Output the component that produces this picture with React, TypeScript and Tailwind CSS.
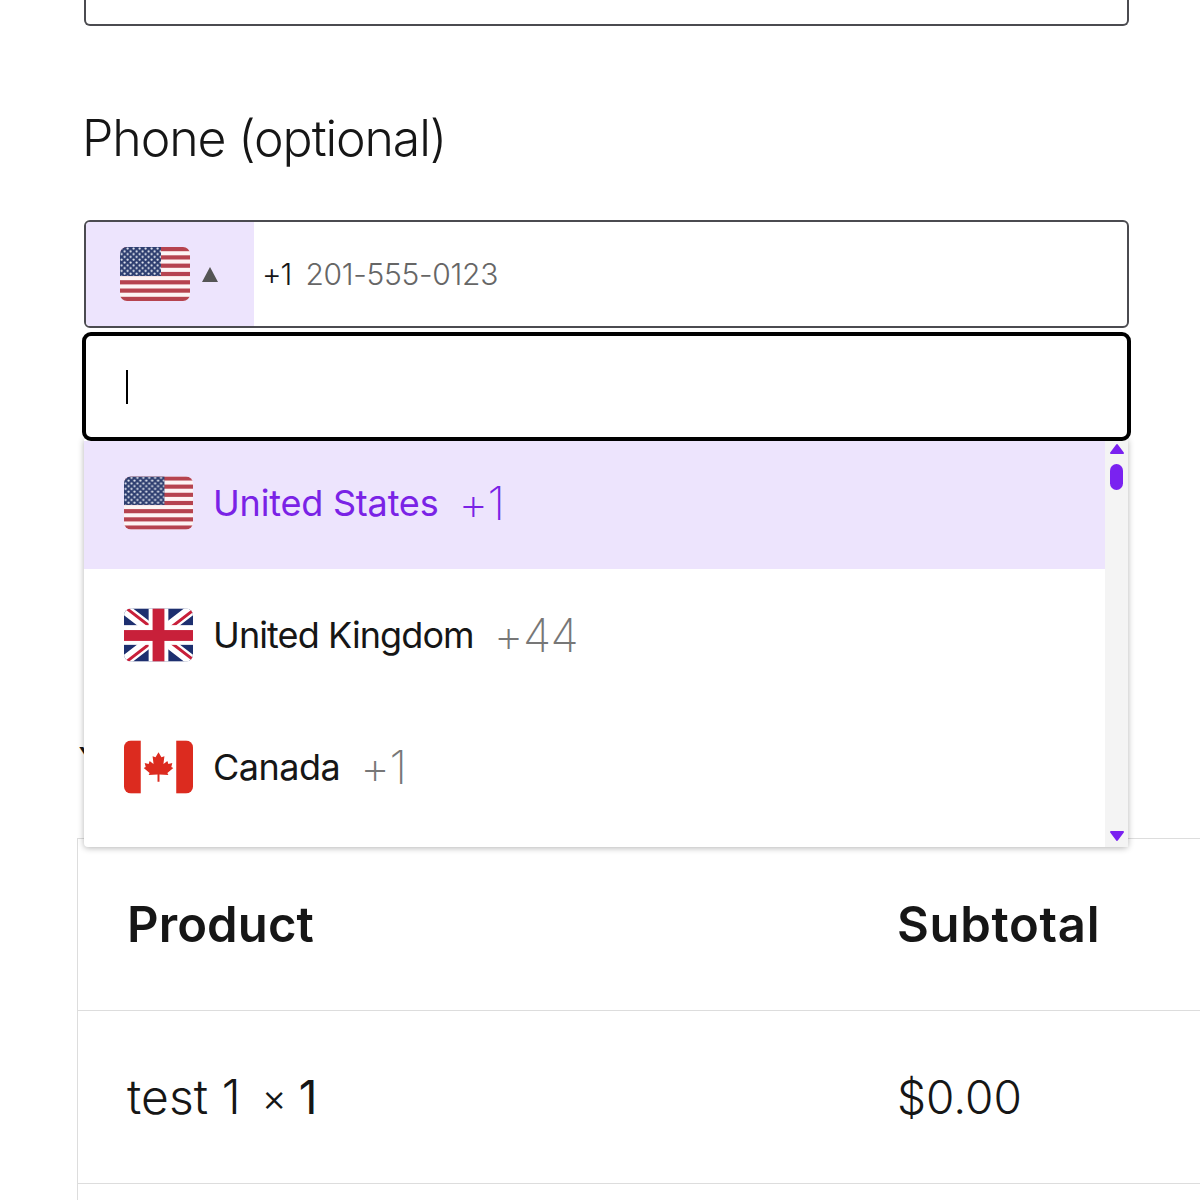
import { ReactNode } from 'react'

function UsFlag() {
  return (
    <svg viewBox="0 0 70 54" className="w-full h-full block">
      <defs>
        <pattern id="stars" width="6" height="5.6" patternUnits="userSpaceOnUse">
          <circle cx="1.6" cy="1.5" r="1.1" fill="#e3e7f0" />
          <circle cx="4.6" cy="4.3" r="1.1" fill="#e3e7f0" />
        </pattern>
        <clipPath id="usRound">
          <rect width="70" height="54" rx="7" />
        </clipPath>
      </defs>
      <g clipPath="url(#usRound)">
        <rect width="70" height="54" fill="#fdf4f4" />
        {[0, 8.3, 16.6, 24.9, 33.2, 41.5, 49.8].map((y) => (
          <rect key={y} y={y} width="70" height="4.2" fill="#b6434f" />
        ))}
        <rect width="41" height="29" fill="#2f3f70" />
        <rect width="41" height="29" fill="url(#stars)" />
      </g>
    </svg>
  )
}

function UkFlag() {
  return (
    <svg viewBox="0 0 70 54" className="w-full h-full block">
      <defs>
        <clipPath id="ukRound">
          <rect width="70" height="54" rx="7" />
        </clipPath>
      </defs>
      <g clipPath="url(#ukRound)">
        <rect width="70" height="54" fill="#1d2f6f" />
        <path d="M0 0 L70 54 M70 0 L0 54" stroke="#fff" strokeWidth="11" />
        <path d="M0 0 L35 27 M35 27 L70 54" stroke="#c8203a" strokeWidth="3" transform="translate(0 -2)" />
        <path d="M70 0 L35 27 M35 27 L0 54" stroke="#c8203a" strokeWidth="3" transform="translate(0 2)" />
        <rect x="25" width="20" height="54" fill="#fff" />
        <rect y="17" width="70" height="20" fill="#fff" />
        <rect x="29" width="12" height="54" fill="#c8203a" />
        <rect y="22" width="70" height="11" fill="#c8203a" />
      </g>
    </svg>
  )
}

function CaFlag() {
  return (
    <svg viewBox="0 0 70 54" className="w-full h-full block">
      <defs>
        <clipPath id="caRound">
          <rect width="70" height="54" rx="7" />
        </clipPath>
      </defs>
      <g clipPath="url(#caRound)">
        <rect width="70" height="54" fill="#fff" />
        <rect width="17" height="54" fill="#dc2b1f" />
        <rect x="53" width="17" height="54" fill="#dc2b1f" />
        <path
          d="M35 12 L38 17 L41 16 L40 24 L44 21 L45 24 L49 23 L48 27 L50 28 L44 33 L45 35 L36 34.5 L36 42 L34 42 L34 34.5 L25 35 L26 33 L20 28 L22 27 L21 23 L25 24 L26 21 L30 24 L29 16 L32 17 Z"
          fill="#dc2b1f"
        />
      </g>
    </svg>
  )
}

function ScrollArrow({ down }: { down?: boolean }) {
  return (
    <svg viewBox="0 0 16 12" className="w-[16px] h-[12px] block">
      <path d={down ? 'M2 2 H14 L8 10 Z' : 'M8 2 L14 10 H2 Z'} fill="#7a22f0" stroke="#7a22f0" strokeWidth="2" strokeLinejoin="round" />
    </svg>
  )
}

function CountryRow({ flag, name, code, active, nameClass }: { flag: ReactNode; name: string; code: string; active?: boolean; nameClass: string }) {
  return (
    <div className={`flex items-center pl-[40px] text-[36px] ${active ? 'h-[128px] pb-[4px] bg-[#ede4fd] text-[#7a22e6]' : 'h-[132px] text-[#161616]'}`}>
      <div className="w-[69px] h-[54px] shrink-0">{flag}</div>
      <span className={`ml-[20px] font-normal ${nameClass}`}>{name}</span>
      <span className={`ml-[20px] text-[46px] leading-[54px] font-extralight tracking-[-0.5px] ${active ? '' : 'text-[#777777]'}`}>{code}</span>
    </div>
  )
}

export default function App() {
  return (
    <div className="w-[1200px] h-[1200px] overflow-hidden bg-white font-['Inter',sans-serif] text-[#161616]">
      <div className="pl-[84px] pr-[71px]">
        <div className="h-[26px] border-2 border-t-0 border-[#4b4b50] rounded-b-[6px]" />

        <h3 className="mt-[84px] -ml-[2px] text-[50px] leading-[56px] font-light tracking-[-1.1px]">Phone (optional)</h3>

        <div className="relative mt-[54px]">
          <div className="flex h-[108px] border-2 border-[#4b4b50] rounded-[6px] overflow-hidden">
            <div className="flex items-center w-[168px] pl-[34px] bg-[#ede4fd] shrink-0">
              <div className="w-[70px] h-[54px]">
                <UsFlag />
              </div>
              <div className="ml-[12px] w-0 h-0 border-x-[8.5px] border-x-transparent border-b-[15px] border-b-[#555555]" />
            </div>
            <div className="flex items-center pl-[8px] text-[30px]">
              <span className="font-light tracking-[-1px]">+1</span>
              <span className="ml-[14px] font-light tracking-[-0.3px] text-[#666666]">201-555-0123</span>
            </div>
          </div>

          <div className="-mx-[2px] mt-[4px] h-[109px] border-[4px] border-black rounded-[9px] bg-white flex items-center pl-[40px] relative z-20">
            <div className="w-[2px] h-[34px] bg-black" />
          </div>

          <div className="absolute z-10 left-0 right-[1px] top-[219px] h-[408px] bg-white flex shadow-[0_1px_6px_rgba(0,0,0,0.3)] rounded-b-[4px]">
            <div className="flex-1 pt-[2px]">
              <CountryRow active flag={<UsFlag />} name="United States" code="+1" nameClass="tracking-[-0.2px]" />
              <CountryRow flag={<UkFlag />} name="United Kingdom" code="+44" nameClass="tracking-[-0.9px]" />
              <CountryRow flag={<CaFlag />} name="Canada" code="+1" nameClass="tracking-[-0.5px]" />
            </div>
            <div className="w-[23px] bg-[#f4f4f4] flex flex-col items-center pt-[4px] pb-[5px]">
              <ScrollArrow />
              <div className="mt-[9px] w-[13px] h-[26px] rounded-full bg-[#7a22f0]" />
              <div className="mt-auto">
                <ScrollArrow down />
              </div>
            </div>
          </div>
        </div>
      </div>

      <h3 className="ml-[78px] mt-[296px] h-[10px] text-[48px] leading-[56px] font-light">Your order</h3>

      <div className="ml-[77px] mt-[91px] border-l border-[#dddddd]">
        <div className="border-t border-[#dddddd] h-[172px] flex items-center pl-[49px]">
          <div className="w-[770px] text-[49px] font-semibold tracking-[0.1px]">Product</div>
          <div className="text-[49px] font-semibold tracking-[0.7px]">Subtotal</div>
        </div>
        <div className="border-t border-[#dddddd] h-[173px] flex items-center pl-[49px]">
          <div className="flex items-center w-[770px] text-[48px] font-light">
            <span className="tracking-[0.1px]">test 1</span>
            <span className="ml-[21px] text-[38px] leading-[40px]">×</span>
            <span className="ml-[12px] text-[46px] font-normal">1</span>
          </div>
          <div className="text-[46px] font-light">$0.00</div>
        </div>
        <div className="border-t border-[#dddddd] h-[40px]" />
      </div>
    </div>
  )
}
